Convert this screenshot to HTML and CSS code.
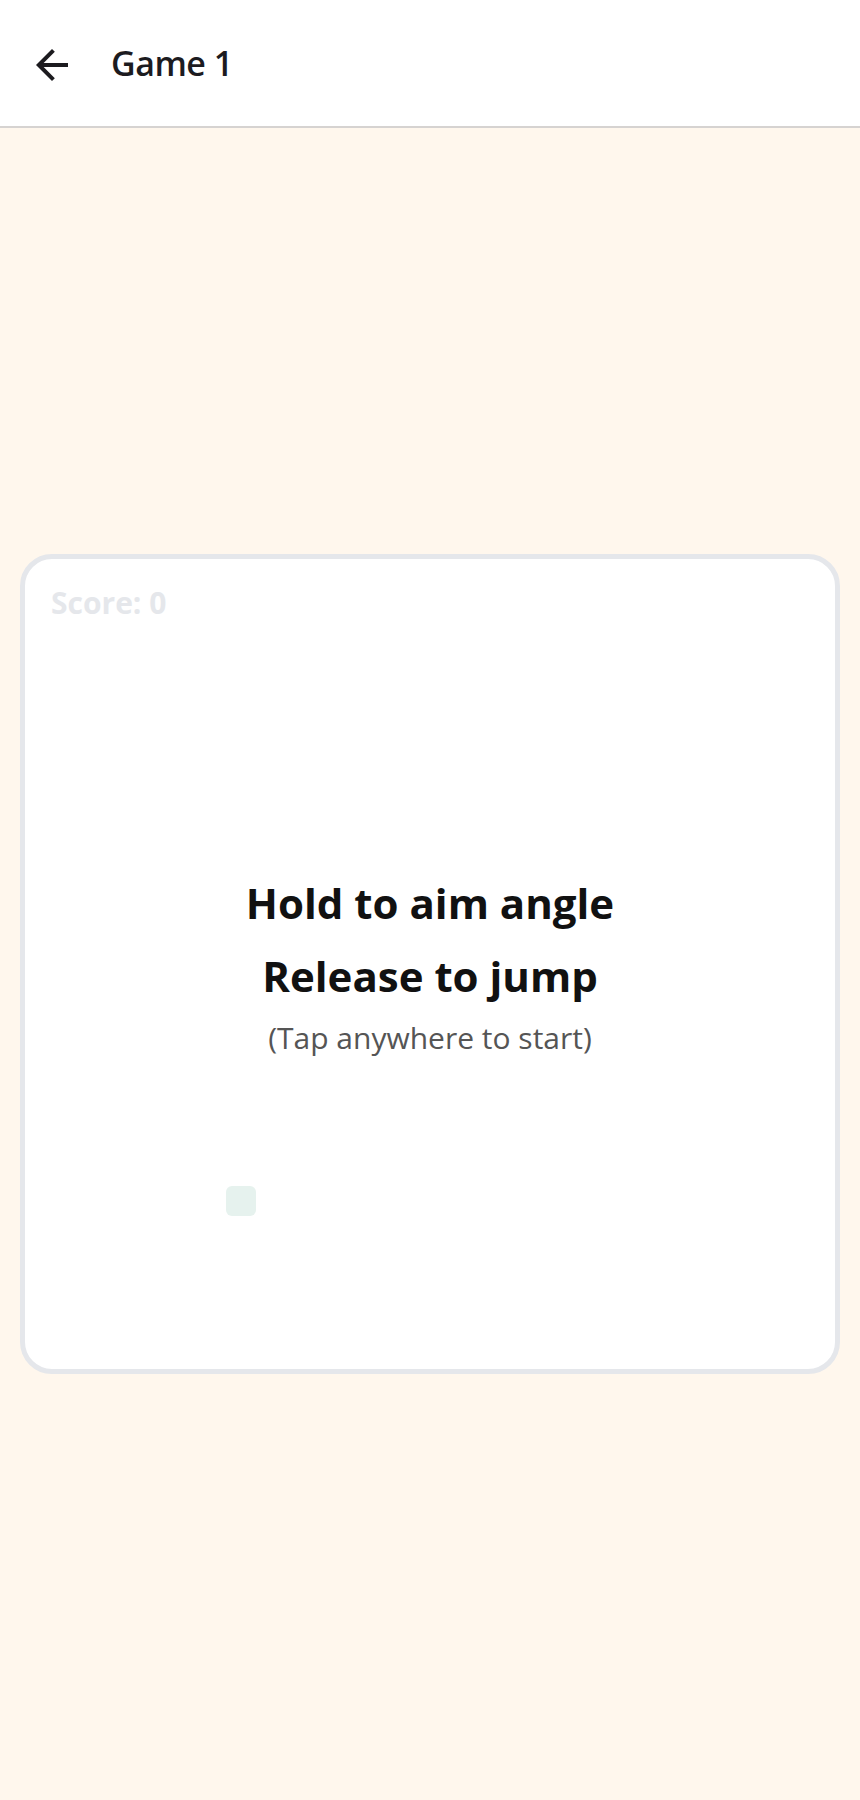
FILE: index.html
```html
<!DOCTYPE html>
<html lang="en">
<head>
<meta charset="utf-8">
<title>Game 1</title>
<link rel="stylesheet" href="styles.css">
</head>
<body>
<header class="app-bar">
  <button class="back-btn" aria-label="Back">
    <svg viewBox="0 0 24 24" width="48" height="48"><path d="M20 11H7.83l5.59-5.59L12 4l-8 8 8 8 1.41-1.41L7.83 13H20v-2z" fill="currentColor"/></svg>
  </button>
  <h1 class="title">Game 1</h1>
</header>
<main class="stage">
  <div class="game-card">
    <div class="score">Score: 0</div>
    <div class="player"></div>
    <div class="overlay">
      <div class="headline">Hold to aim angle</div>
      <div class="headline">Release to jump</div>
      <div class="hint">(Tap anywhere to start)</div>
    </div>
  </div>
</main>
</body>
</html>
```
FILE: styles.css
```css
* { box-sizing: border-box; }
html, body { margin: 0; padding: 0; }
body {
  background: #fff7ed;
  font-family: "Open Sans", "Noto Sans", sans-serif;
  color: #1c1b1f;
  min-height: 1800px;
}
.app-bar {
  height: 128px;
  background: #ffffff;
  border-bottom: 2px solid #d6d3d1;
  display: flex;
  align-items: center;
  padding-left: 28px;
  gap: 35px;
}
.back-btn {
  width: 48px;
  height: 48px;
  padding: 0;
  border: 0;
  background: transparent;
  color: #1c1b1f;
  display: flex;
  margin-top: 4px;
}
.title {
  margin: 0;
  font-size: 34px;
  font-weight: 600;
  color: #1c1b1f;
  letter-spacing: -0.5px;
}
.stage {
  height: 1672px;
  display: flex;
  align-items: center;
  justify-content: center;
  padding: 0 20px;
}
.game-card {
  position: relative;
  width: 820px;
  height: 820px;
  background: #ffffff;
  border: 5px solid #e5e7eb;
  border-radius: 32px;
  padding: 26px 26px;
}
.score {
  font-size: 30px;
  font-weight: 700;
  color: #e5e7eb;
  line-height: 1.2;
}
.player {
  position: absolute;
  left: 201px;
  top: 627px;
  width: 30px;
  height: 30px;
  border-radius: 6px;
  background: #e6f2ee;
}
.overlay {
  position: absolute;
  inset: 0;
  display: flex;
  flex-direction: column;
  align-items: center;
  justify-content: center;
  padding-bottom: 2px;
}
.headline {
  font-size: 42px;
  font-weight: 700;
  color: #111111;
  line-height: 73px;
}
.hint {
  font-size: 30px;
  color: #555555;
  line-height: 44px;
  margin-top: 4px;
}
```
